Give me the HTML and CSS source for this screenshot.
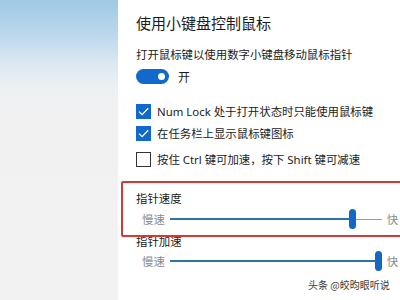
FILE: index.html
```html
<!DOCTYPE html>
<html lang="zh-CN">
<head>
<meta charset="utf-8">
<link rel="stylesheet" href="styles.css">
</head>
<body>
<div class="page">
  <aside class="side"></aside>
  <main class="main">
    <h1 class="title">使用小键盘控制鼠标</h1>
    <p class="desc">打开鼠标键以使用数字小键盘移动鼠标指针</p>
    <div class="toggle-row">
      <span class="toggle"><span class="knob"></span></span>
      <span class="toggle-label">开</span>
    </div>
    <label class="check-row r1">
      <span class="box on"><svg viewBox="0 0 15 15" width="15" height="15"><path d="M3 7.6 L6.1 10.6 L12.2 4.2" fill="none" stroke="#fff" stroke-width="1.3"/></svg></span>
      <span>Num Lock 处于打开状态时只能使用鼠标键</span>
    </label>
    <label class="check-row r2">
      <span class="box on"><svg viewBox="0 0 15 15" width="15" height="15"><path d="M3 7.6 L6.1 10.6 L12.2 4.2" fill="none" stroke="#fff" stroke-width="1.3"/></svg></span>
      <span>在任务栏上显示鼠标键图标</span>
    </label>
    <label class="check-row r3">
      <span class="box"></span>
      <span>按住 Ctrl 键可加速，按下 Shift 键可减速</span>
    </label>

    <div class="group g1">
      <div class="group-title">指针速度</div>
      <div class="slider">
        <span class="end">慢速</span>
        <span class="track"><span class="fill" style="width:86%"></span><span class="thumb" style="left:86%"></span></span>
        <span class="end fast">快</span>
      </div>
    </div>
    <div class="group g2">
      <div class="group-title">指针加速</div>
      <div class="slider">
        <span class="end">慢速</span>
        <span class="track"><span class="fill" style="width:100%"></span><span class="thumb" style="left:100%"></span></span>
        <span class="end fast">快</span>
      </div>
    </div>
    <div class="watermark">头条 @皎昀眼听说</div>
    <div class="highlight"></div>
  </main>
</div>
</body>
</html>
```
FILE: styles.css
```css
* { box-sizing: border-box; }
html, body { margin: 0; padding: 0; }
body {
  width: 400px;
  height: 300px;
  overflow: hidden;
  font-family: "Noto Sans", "Noto Sans CJK SC", sans-serif;
  color: #1b1b1b;
  background: #fff;
}
.page { display: flex; width: 400px; height: 300px; overflow: hidden; }
.side {
  width: 118px;
  flex: none;
  background: linear-gradient(to bottom, #9fc9e5 0px, #bcd8ec 35px, #dde9f1 65px, #eef1f3 90px, #f1f1f1 120px, #f2f2f2 300px);
}
.main {
  flex: 1;
  position: relative;
  overflow: hidden;
  padding: 13px 0 0 18px;
  background: #fff;
}
.title {
  margin: 0;
  font-size: 15px;
  font-weight: 400;
  line-height: 20px;
  font-family: "Noto Sans CJK SC", sans-serif;
  color: #1a1a1a;
}
.desc {
  margin: 13px 0 0;
  font-size: 11.4px;
  line-height: 16px;
  font-family: "Noto Sans CJK SC", sans-serif;
}
.toggle-row {
  display: flex;
  align-items: center;
  height: 16px;
  margin-top: 6px;
}
.toggle {
  width: 33px;
  height: 15px;
  border-radius: 8px;
  background: #1169cc;
  display: flex;
  align-items: center;
  justify-content: flex-end;
  padding-right: 4px;
}
.knob { width: 7px; height: 7px; border-radius: 50%; background: #fff; }
.toggle-label {
  margin-left: 9px;
  font-size: 12px;
  font-family: "Noto Sans CJK SC", sans-serif;
}
.check-row {
  display: flex;
  align-items: center;
  height: 16px;
  font-size: 11.4px;
  font-family: "Noto Sans", "Noto Sans CJK SC", sans-serif;
  gap: 6px;
}
.r1 { margin-top: 19px; }
.r2 { margin-top: 6px; }
.r3 { margin-top: 10px; }
.box {
  width: 15px;
  height: 15px;
  flex: none;
  border: 1.5px solid #333;
  display: flex;
  align-items: center;
  justify-content: center;
}
.box.on { background: #1169cc; border: none; }
.group-title {
  font-size: 11.4px;
  line-height: 16px;
  font-family: "Noto Sans CJK SC", sans-serif;
}
.g1 { margin-top: 23px; }
.g2 { margin-top: 4px; }
.slider {
  display: flex;
  align-items: center;
  height: 20px;
  margin-top: 3px;
  padding-left: 6px;
}
.g2 .slider { margin-top: 2px; }
.end {
  font-size: 11.4px;
  color: #8a8a8a;
  font-family: "Noto Sans CJK SC", sans-serif;
}
.track {
  position: relative;
  width: 212px;
  height: 1px;
  margin-left: 5px;
  background: #9a9a9a;
}
.fill {
  position: absolute;
  left: 0;
  top: -0.5px;
  height: 2px;
  background: #2b74a6;
}
.thumb {
  position: absolute;
  top: -9.5px;
  width: 7px;
  height: 20px;
  margin-left: -7px;
  border-radius: 4px;
  background: #1467c4;
}
.g1 .thumb { margin-left: -3.5px; }
.fast { margin-left: 5px; }
.watermark {
  margin: 6px 0 0 172px;
  font-size: 10px;
  line-height: 16px;
  color: #3a3a3a;
  font-family: "Noto Sans CJK SC", sans-serif;
  white-space: nowrap;
}
.highlight {
  position: absolute;
  left: 3px;
  top: 181px;
  width: 300px;
  height: 56px;
  border: 2px solid #d23a3a;
  border-radius: 2px;
}
```
